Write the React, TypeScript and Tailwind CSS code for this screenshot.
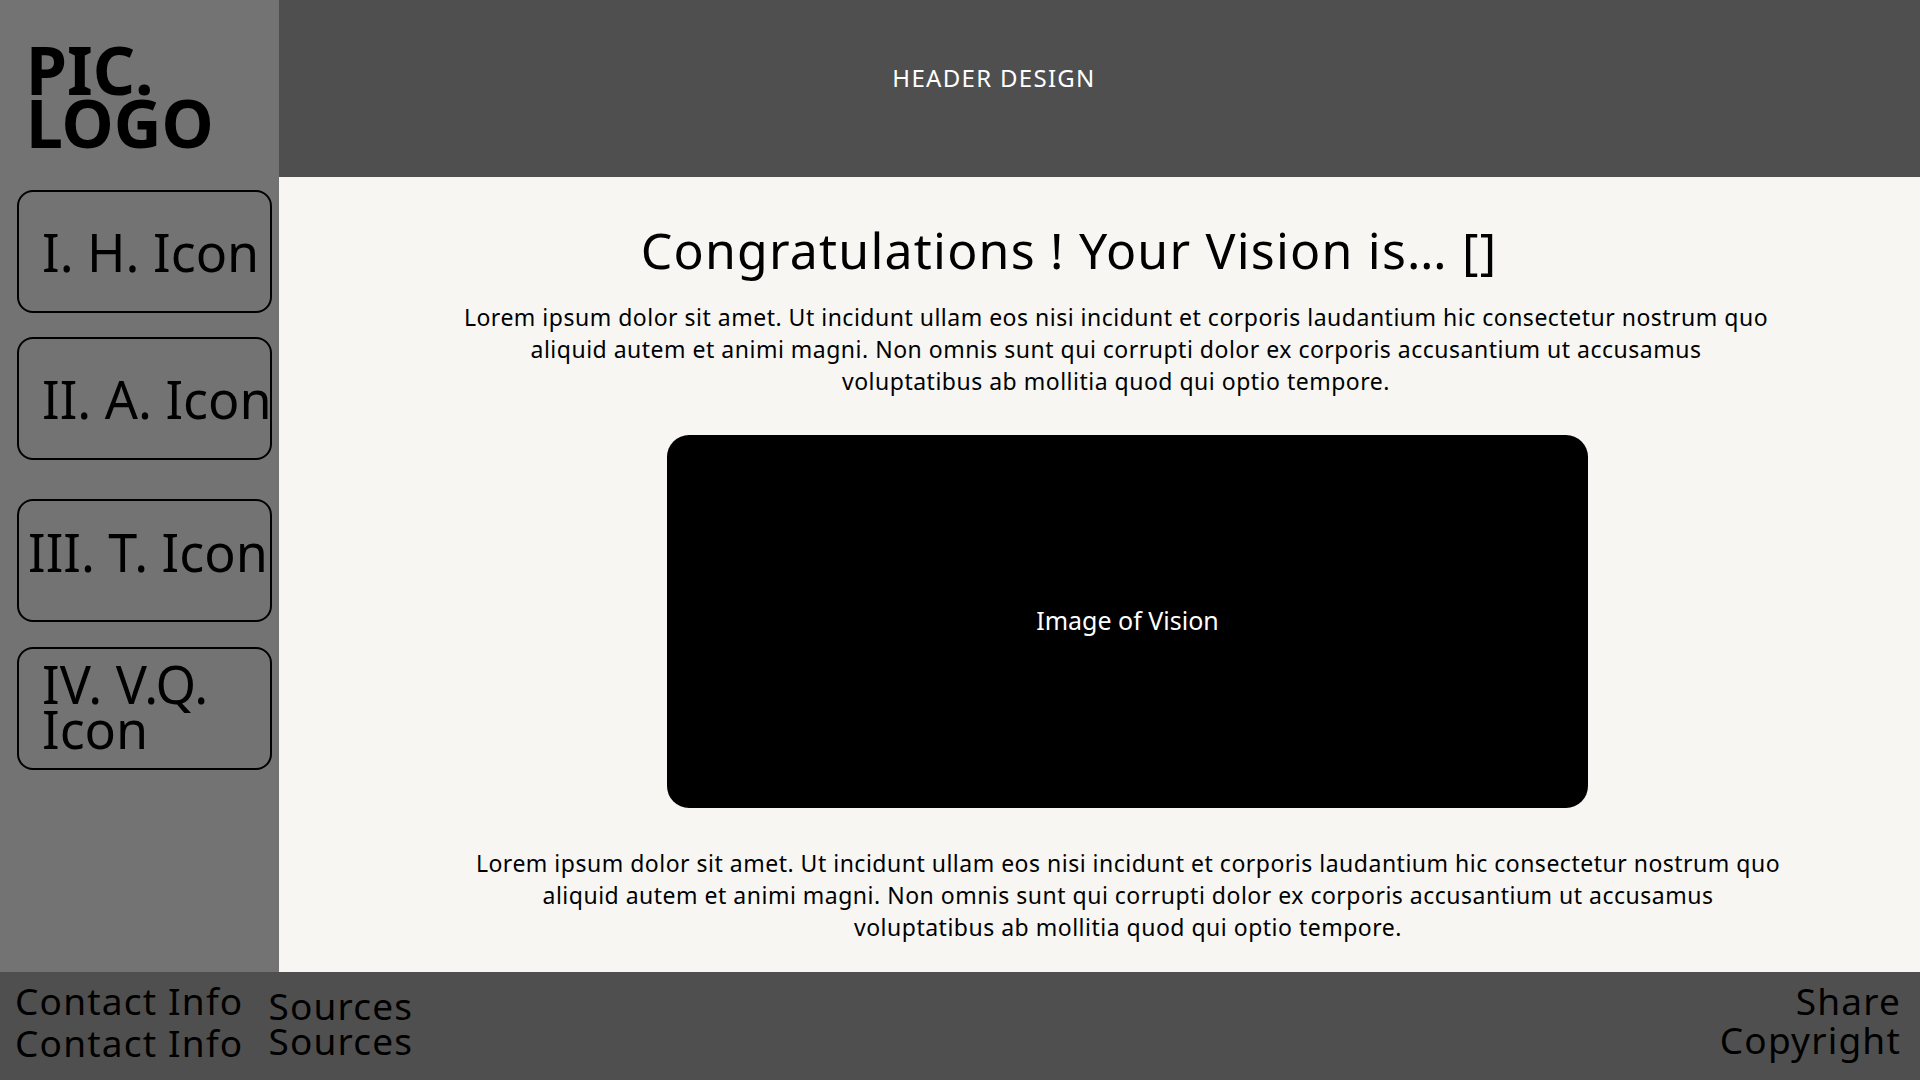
import React from "react";

const font = { fontFamily: '"Noto Sans", "Open Sans", sans-serif' };

function NavBox({
  children,
  className,
}: {
  children: React.ReactNode;
  className: string;
}) {
  return (
    <div
      className={
        "w-[255px] h-[123px] border-2 border-black rounded-[16px] text-black text-[52px] whitespace-nowrap overflow-visible " +
        className
      }
    >
      {children}
    </div>
  );
}

export default function App() {
  return (
    <div className="w-[1920px] h-[1080px] flex flex-col overflow-hidden" style={font}>
      <div className="flex flex-1 min-h-0">
        {/* Sidebar */}
        <aside className="w-[279px] shrink-0 bg-[#737373] flex flex-col">
          <div className="pt-[43px] pl-[26px] text-black font-bold text-[66px] leading-[53px]">
            <div>PIC.</div>
            <div>LOGO</div>
          </div>
          <div className="pl-[17px] flex flex-col">
            <NavBox className="mt-[41px] pt-[34px] pl-[23px] leading-[52px]">I. H. Icon</NavBox>
            <NavBox className="mt-[24px] pt-[34px] pl-[23px] leading-[52px]">II. A. Icon</NavBox>
            <NavBox className="mt-[39px] pt-[25px] pl-[9px] leading-[52px]">III. T. Icon</NavBox>
            <NavBox className="mt-[25px] pt-[12px] pl-[23px] leading-[45px]">
              <div>IV. V.Q.</div>
              <div>Icon</div>
            </NavBox>
          </div>
        </aside>

        {/* Right column */}
        <div className="flex-1 flex flex-col min-w-0">
          <header className="h-[177px] shrink-0 bg-[#4f4f4f] flex items-start justify-center">
            <div className="mt-[61px] mr-[211px] text-white text-[24px] leading-[34px] tracking-[1.3px] whitespace-nowrap">
              HEADER DESIGN
            </div>
          </header>
          <main className="flex-1 bg-[#f7f6f3] flex flex-col items-center pt-[43px]">
            <h1 className="mr-[61px] text-black text-[50px] leading-[60px] font-normal tracking-[1.2px] whitespace-nowrap">
              Congratulations ! Your Vision is… []
            </h1>
            <div className="mt-[21px] ml-[33px] text-black text-[23px] leading-[32px] tracking-[0.5px] text-center whitespace-nowrap">
              <div>
                Lorem ipsum dolor sit amet. Ut incidunt ullam eos nisi incidunt et corporis laudantium hic consectetur nostrum quo
              </div>
              <div>
                aliquid autem et animi magni. Non omnis sunt qui corrupti dolor ex corporis accusantium ut accusamus
              </div>
              <div>voluptatibus ab mollitia quod qui optio tempore.</div>
            </div>
            <div className="mt-[38px] ml-[56px] w-[921px] h-[373px] bg-black rounded-[22px] flex items-center justify-center">
              <span className="text-white text-[25px] leading-[34px] -mt-[3px]">Image of Vision</span>
            </div>
            <div className="mt-[39px] ml-[57px] text-black text-[23px] leading-[32px] tracking-[0.5px] text-center whitespace-nowrap">
              <div>
                Lorem ipsum dolor sit amet. Ut incidunt ullam eos nisi incidunt et corporis laudantium hic consectetur nostrum quo
              </div>
              <div>
                aliquid autem et animi magni. Non omnis sunt qui corrupti dolor ex corporis accusantium ut accusamus
              </div>
              <div>voluptatibus ab mollitia quod qui optio tempore.</div>
            </div>
          </main>
        </div>
      </div>

      {/* Footer */}
      <footer className="h-[108px] shrink-0 bg-[#4f4f4f] flex items-start text-black text-[37px] tracking-[1.2px] whitespace-nowrap">
        <div className="pl-[15px] pt-[8px] leading-[42px]">
          <div>Contact Info</div>
          <div>Contact Info</div>
        </div>
        <div className="pl-[25px] pt-[16px] leading-[35px]">
          <div>Sources</div>
          <div>Sources</div>
        </div>
        <div className="ml-auto pr-[19px] pt-[9px] leading-[39px] text-right">
          <div>Share</div>
          <div>Copyright</div>
        </div>
      </footer>
    </div>
  );
}
